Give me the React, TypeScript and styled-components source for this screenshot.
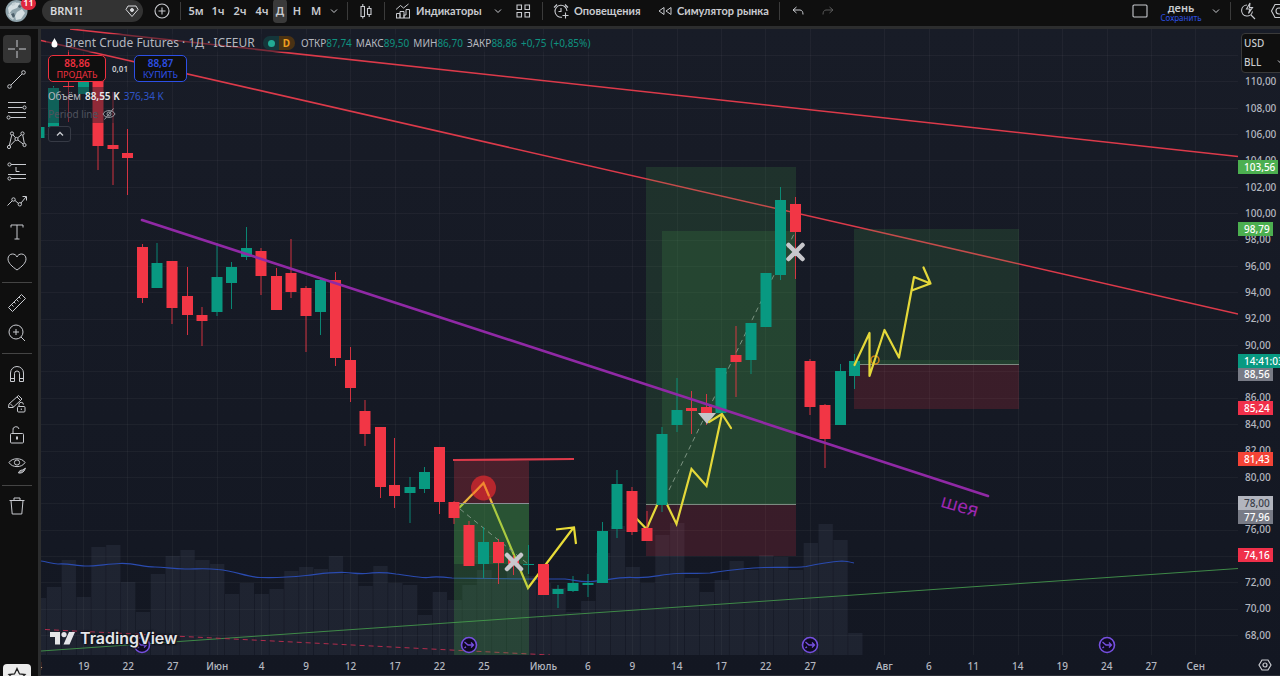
import React from "react";
import styled, { createGlobalStyle } from "styled-components";

const FONT = '"Noto Sans", "Open Sans", "Liberation Sans", sans-serif';

const GlobalStyle = createGlobalStyle`
  *, *::before, *::after { box-sizing: border-box; }
  html, body { margin: 0; padding: 0; background: #0f0f0f; }
  button, input { font: inherit; color: inherit; }
  button { background: none; border: 0; padding: 0; cursor: pointer; }
`;

/* ---------- chart geometry ---------- */

const X0 = 41;
const Y0 = 29;
const W = 1197;
const H = 626;
const BOTTOM = Y0 + H;
const PITCH = 14.84;

const xPct = (x: number) => `${((x - X0) / W) * 100}%`;
const yPct = (y: number) => `${((y - Y0) / H) * 100}%`;

type Candle = [x: number, up: 0 | 1, top: number, bottom: number, high: number, low: number];

const candles: Candle[] = [
  [39, 1, 127, 138, 127, 138],
  [53.5, 1, 88, 127, 86, 127],
  [68.5, 0, 86, 87, 50, 122],
  [83.5, 1, 82, 94, 82, 94],
  [98, 0, 70, 146, 70, 170],
  [113, 0, 145, 149, 92, 185],
  [127.5, 0, 153, 158, 129, 195],
  [142.5, 0, 247, 298, 244, 303],
  [157, 1, 263, 288, 243, 288],
  [172, 0, 261, 308, 261, 324],
  [187.5, 0, 296, 315, 267, 335],
  [202, 0, 315, 321, 307, 346],
  [217, 1, 277, 312, 243, 316],
  [231.5, 1, 267, 283, 262, 309],
  [246.5, 1, 248, 257, 227, 260],
  [261, 0, 251, 276, 248, 295],
  [276.5, 0, 276, 310, 268, 310],
  [291, 0, 273, 292, 239, 298],
  [306, 0, 288, 316, 286, 352],
  [320.5, 1, 280, 312, 279, 335],
  [335.5, 0, 280, 358, 272, 366],
  [350.5, 0, 360, 388, 347, 402],
  [365, 0, 411, 434, 400, 446],
  [380.5, 0, 427, 487, 427, 498],
  [394.5, 0, 485, 496, 438, 508],
  [410, 1, 487, 493, 477, 523],
  [424.5, 1, 472, 489, 467, 493],
  [439.5, 0, 447, 502, 447, 514],
  [454, 0, 502, 518, 501, 524],
  [469, 0, 525, 566, 521, 566],
  [483.5, 1, 542, 564, 527, 578],
  [498.5, 0, 542, 563, 539, 584],
  [513.5, 0, 558, 564, 555, 575],
  [528.5, 1, 564, 565, 545, 574],
  [543.5, 0, 564, 595, 564, 595],
  [558, 1, 589, 594, 585, 608],
  [573, 1, 583, 591, 576, 592],
  [588, 1, 583, 585, 574, 597],
  [602.5, 1, 531, 583, 522, 583],
  [617, 1, 484, 529, 470, 538],
  [632, 0, 491, 532, 487, 535],
  [647, 0, 528, 541, 511, 541],
  [662, 1, 434, 505, 427, 512],
  [677, 1, 410, 425, 378, 432],
  [691.5, 0, 408, 411, 391, 434],
  [706.5, 0, 407, 413, 394, 425],
  [721, 1, 368, 413, 368, 413],
  [736, 0, 355, 362, 326, 397],
  [751, 1, 323, 360, 323, 374],
  [766, 1, 273, 327, 273, 327],
  [780.5, 1, 200, 275, 187, 280],
  [795.5, 0, 204, 232, 197, 279],
  [810, 0, 361, 407, 359, 415],
  [825, 0, 405, 439, 404, 468],
  [840.5, 1, 371, 425, 364, 425],
  [854.5, 1, 361, 376, 354, 389],
];

const volumeTops = [
  598, 587, 560, 597, 547, 545, 582, 612, 574, 556, 550, 560, 564, 594, 583, 594, 589, 571, 567,
  569, 556, 574, 586, 566, 583, 585, 615, 592, 600, 585, 570, 578, 568, 576, 583, 588, 612, 601,
  553, 526, 567, 583, 535, 523, 578, 592, 580, 561, 570, 555, 557, 570, 543, 524, 540, 633,
];

const gridX = [
  83, 127, 172, 217, 261, 306, 350, 395, 439, 484, 543, 588, 632, 677, 721, 765, 810, 884, 929,
  973, 1018, 1062, 1107, 1151, 1195,
];

const prices = Array.from({ length: 22 }, (_, i) => 110 - i * 2);

/* round prices whose place on the axis is taken by a tag */
const taken = new Set([88, 78, 74]);

const timeLabels: [string, number][] = [
  ["4", 1], ["19", 4], ["22", 7], ["27", 10], ["Июн", 13], ["4", 16], ["9", 19], ["12", 22],
  ["17", 25], ["22", 28], ["25", 31], ["Июль", 35], ["6", 38], ["9", 41], ["14", 44], ["17", 47],
  ["22", 50], ["27", 53], ["Авг", 58], ["6", 61], ["11", 64], ["14", 67], ["19", 70], ["24", 73],
  ["27", 76], ["Сен", 79],
];

const priceTags: { text: string; y: number; bg: string; fg?: string; wide?: boolean }[] = [
  { text: "103,56", y: 167, bg: "#4caf50", wide: true },
  { text: "98,79", y: 229, bg: "#4caf50" },
  { text: "88,56", y: 374, bg: "#787b86" },
  { text: "14:41:03", y: 361, bg: "#089981", wide: true },
  { text: "85,24", y: 408, bg: "#f0304a" },
  { text: "81,43", y: 459, bg: "#f44336" },
  { text: "78,00", y: 503, bg: "#b2b5be", fg: "#3a3e4a" },
  { text: "77,96", y: 517, bg: "#787b86" },
  { text: "74,16", y: 555, bg: "#f0304a" },
];

/* ---------- frame ---------- */

const Page = styled.div`
  display: flex;
  flex-direction: column;
  height: 100vh;
  min-height: 560px;
  overflow: hidden;
  background: #0f0f0f;
  color: #c9cbd0;
  font-family: ${FONT};
  font-size: 11px;
  line-height: 14px;
`;

const Toolbar = styled.header`
  display: flex;
  align-items: center;
  flex: none;
  height: 29px;
  padding-bottom: 4px;
  border-bottom: 3px solid #2c2d2e;
  background: #0f0f0f;
  white-space: nowrap;
  overflow: hidden;
`;

const Divider = styled.span`
  flex: none;
  width: 1px;
  height: 18px;
  background: #3b3b3b;
`;

const Avatar = styled.button`
  position: relative;
  flex: none;
  width: 34px;
  height: 24px;
  margin-right: 8px;
  padding-left: 5px;
  svg { display: block; }
`;

const Badge = styled.span`
  position: absolute;
  top: -2px;
  right: -2px;
  width: 15px;
  height: 13px;
  border-radius: 7px;
  background: #e0283e;
  color: #fff;
  font-size: 9px;
  font-weight: 600;
  line-height: 12px;
  text-align: center;
`;

const SymbolSearch = styled.button`
  display: flex;
  align-items: center;
  justify-content: space-between;
  flex: none;
  width: 101px;
  height: 22px;
  padding: 0 4px 0 8px;
  border-radius: 11px;
  background: #333333;
  color: #d8d9dc;
  font-weight: 600;
`;

const ToolButton = styled.button<{ $w: number; $active?: boolean }>`
  display: flex;
  align-items: center;
  justify-content: center;
  flex: none;
  width: ${(p) => p.$w}px;
  height: 24px;
  border-radius: 4px;
  background: ${(p) => (p.$active ? "#3a3a3a" : "transparent")};
  font-weight: 600;
`;

const LabelButton = styled(ToolButton)`
  justify-content: flex-start;
  gap: 5px;
  padding-left: 10px;
  font-family: Lato, ${FONT};
  font-weight: 700;
`;

const Intervals = styled.div`
  display: flex;
  align-items: center;
  padding: 0 4px;
`;

const Spacer = styled.div`
  flex: 1;
`;

const LayoutName = styled.button`
  display: flex;
  flex-direction: column;
  align-items: center;
  flex: none;
  width: 42px;
  padding-top: 2px;
  line-height: 10px;
  font-weight: 600;
  small {
    color: #2d50e6;
    font-size: 8px;
    font-weight: 400;
    line-height: 9px;
  }
`;

const Main = styled.div`
  display: flex;
  flex: 1;
  min-height: 0;
`;

const Sidebar = styled.nav`
  display: flex;
  flex-direction: column;
  flex: none;
  width: 41px;
  padding: 6px 7px 0 3px;
  border-right: 3px solid #2c2d2e;
  background: #0f0f0f;
  overflow: hidden;
`;

const ToolGroup = styled.div<{ $h: number }>`
  display: flex;
  flex-direction: column;
  justify-content: space-between;
  flex: none;
  height: ${(p) => p.$h}px;
`;

const SideButton = styled.button<{ $active?: boolean }>`
  display: flex;
  align-items: center;
  justify-content: center;
  flex: none;
  width: 28px;
  height: 28px;
  border-radius: 4px;
  background: ${(p) => (p.$active ? "#343434" : "transparent")};
`;

const SideDivider = styled.hr`
  flex: none;
  width: 30px;
  height: 1px;
  margin: 6px 0 6px -1px;
  border: 0;
  background: #444444;
`;

const Favorites = styled.button`
  display: flex;
  justify-content: center;
  align-items: flex-start;
  flex: none;
  width: 28px;
  height: 12px;
  margin-top: auto;
  padding-top: 3px;
  border-radius: 4px 4px 0 0;
  background: #ececec;
  color: #222;
  overflow: hidden;
`;

const ChartArea = styled.main`
  display: flex;
  flex-direction: column;
  flex: 1;
  min-width: 0;
  background: linear-gradient(#181c27, #131722);
`;

const PlotRow = styled.div`
  display: flex;
  flex: 1;
  min-height: 0;
`;

const Plot = styled.section`
  position: relative;
  flex: 1;
  min-width: 0;
  overflow: hidden;
`;

const Canvas = styled.svg`
  display: block;
  width: 100%;
  height: 100%;
`;

const PriceAxis = styled.aside`
  position: relative;
  display: flex;
  flex-direction: column;
  flex: none;
  width: 42px;
  padding: 39px 0 7px;
  overflow: hidden;
`;

const PriceLabel = styled.span`
  display: flex;
  align-items: center;
  flex: 1;
  padding-left: 7px;
  color: #b5b8c0;
  font-size: 10px;
  font-weight: 500;
`;

const PriceTag = styled.span<{ $bg: string; $fg?: string; $wide?: boolean }>`
  position: absolute;
  left: 0;
  min-width: ${(p) => (p.$wide ? 40 : 35)}px;
  height: 14px;
  margin-top: -7px;
  padding-left: 6px;
  background: ${(p) => p.$bg};
  color: ${(p) => p.$fg || "#fff"};
  font-size: 10px;
  font-weight: 500;
  line-height: 14px;
`;

const Units = styled.div`
  position: absolute;
  top: 4px;
  left: 3px;
  display: flex;
  flex-direction: column;
  gap: 1px;
  width: 50px;
  height: 40px;
  border: 1px solid #3a3a3a;
  border-radius: 4px;
  background: #0f0f0f;
`;

const UnitButton = styled.button`
  display: flex;
  align-items: center;
  gap: 16px;
  width: 100%;
  height: 18px;
  padding-left: 2px;
  font-size: 10px;
  font-weight: 500;
`;

const TimeRow = styled.footer`
  display: flex;
  flex: none;
  height: 21px;
  border-bottom: 1px solid #2a2d36;
`;

const TimeViewport = styled.div`
  flex: 1;
  min-width: 0;
  overflow: hidden;
`;

const TimeGrid = styled.div`
  display: grid;
  grid-template-columns: repeat(81, minmax(0, 1fr));
  margin: 0 20px 0 -24px;
  padding-top: 4px;
`;

const TimeLabel = styled.span<{ $col: number }>`
  grid-row: 1;
  grid-column: ${(p) => p.$col} / span 3;
  text-align: center;
  color: #b5b8c0;
  font-size: 10px;
  font-weight: 500;
`;

const AxisSettings = styled.button`
  display: flex;
  align-items: center;
  flex: none;
  width: 42px;
  padding-left: 20px;
`;

/* ---------- legend over the plot ---------- */

const Legend = styled.div`
  position: absolute;
  top: 5px;
  left: 5px;
  display: flex;
  flex-direction: column;
  align-items: flex-start;
  white-space: nowrap;
`;

const TitleRow = styled.div`
  display: flex;
  align-items: center;
  height: 18px;
  padding: 0 2px 0 5px;
  background: rgba(24, 28, 39, 0.5);
`;

const Title = styled.h1`
  width: 198px;
  margin: 0 0 0 7px;
  color: #b4b7bf;
  font-size: 12px;
  font-weight: 400;
  line-height: 18px;
`;

const StatusPill = styled.span`
  display: flex;
  align-items: center;
  justify-content: space-between;
  width: 32px;
  height: 14px;
  margin-right: 6px;
  padding: 0 5px;
  border-radius: 7px;
  background: linear-gradient(90deg, #14363a 50%, #4a3213 50%);
  color: #f0a020;
  font-size: 10px;
  font-weight: 700;
  &::before {
    content: "";
    width: 7px;
    height: 7px;
    border-radius: 50%;
    background: #22ab94;
  }
`;

const Quotes = styled.dl`
  display: flex;
  gap: 4px;
  margin: 0;
  font-size: 10px;
  div { display: flex; }
  dt { color: #b4b7bf; }
  dd { margin: 0; color: #0f9280; }
`;

const TradeRow = styled.div`
  display: flex;
  align-items: center;
  height: 27px;
  margin: 3px 0 5px 2px;
`;

const TradeButton = styled.button<{ $color: string; $w: number }>`
  width: ${(p) => p.$w}px;
  height: 27px;
  border: 1px solid ${(p) => p.$color};
  border-radius: 5px;
  background: #0f0f0f;
  color: ${(p) => p.$color};
  font-size: 9px;
  line-height: 12px;
  b {
    display: block;
    font-size: 10px;
    font-weight: 600;
    line-height: 12px;
  }
`;

const Spread = styled.span`
  width: 28px;
  text-align: center;
  font-size: 8px;
  font-weight: 600;
`;

const StudyRow = styled.div<{ $muted?: boolean }>`
  display: flex;
  align-items: center;
  gap: 4px;
  height: 18px;
  padding: 0 3px 0 2px;
  background: rgba(24, 28, 39, 0.45);
  color: ${(p) => (p.$muted ? "#50535e" : "#b4b7bf")};
  font-size: 10px;
  strong { color: #e8e9ec; font-weight: 600; }
  em { color: #2f55c8; font-style: normal; }
  svg { color: #9a9ca3; }
`;

const CollapseButton = styled.button`
  display: flex;
  align-items: center;
  justify-content: center;
  width: 23px;
  height: 16px;
  margin: 3px 0 0 2px;
  border: 1px solid #363a45;
  border-radius: 3px;
  background: rgba(24, 28, 39, 0.6);
`;

const Brand = styled.a`
  position: absolute;
  left: 9px;
  bottom: 6px;
  display: flex;
  align-items: center;
  gap: 5px;
  color: #e4e5e8;
  font-family: Inter, "Liberation Sans", sans-serif;
  font-size: 16px;
  font-weight: 600;
  line-height: 22px;
  text-decoration: none;
  text-shadow: 0 0 2px #10131b, 1px 1px 1px #10131b, -1px -1px 1px #10131b, 0 0 3px #10131b;
`;

const NeckNote = styled.span`
  position: absolute;
  color: #9c27b0;
  font-size: 19px;
  line-height: 24px;
  transform: translate(-50%, -50%) rotate(16deg);
`;

/* ---------- icons ---------- */

function Icon({ w = 22, h = 22, sw = 1, children }: { w?: number; h?: number; sw?: number; children: React.ReactNode }) {
  return (
    <svg width={w} height={h} viewBox={`0 0 ${w} ${h}`} fill="none" stroke="currentColor" strokeWidth={sw} aria-hidden="true">
      {children}
    </svg>
  );
}

const Chevron = () => (
  <Icon w={8} h={6}><path d="M1 1.5 4 4.5 7 1.5" /></Icon>
);

const Hexagon = () => (
  <Icon w={14} h={14} sw={1.2}>
    <path d="M4 2h6l3 5-3 5H4L1 7z" />
    <circle cx="7" cy="7" r="2" />
  </Icon>
);

const sideIcons: Record<string, React.ReactNode> = {
  "Перекрестие": <path d="M11 2v7M11 13v7M2 11h7M13 11h7" />,
  "Линия тренда": (
    <>
      <circle cx="3.5" cy="18.5" r="1.8" />
      <circle cx="17.5" cy="4.5" r="1.8" />
      <path d="M5 17 16 6" />
    </>
  ),
  "Фибоначчи": (
    <>
      <path d="M2 3.5h18M2 8.5h14.5M2 13.5h18M4.5 18.5H20" />
      <circle cx="18.5" cy="8.5" r="1.6" />
      <circle cx="2.6" cy="18.5" r="1.6" />
    </>
  ),
  "Паттерны": (
    <>
      <circle cx="6" cy="4.5" r="1.6" />
      <circle cx="3" cy="18" r="1.6" />
      <circle cx="10.5" cy="10" r="1.6" />
      <circle cx="16.5" cy="4.5" r="1.6" />
      <circle cx="18.5" cy="16" r="1.6" />
      <path d="M5.7 6.2 3.4 16.3M7 5.8l2.5 3M4 16.8l5.4-5.6M11.7 8.8l3.6-3M16.8 6.2l1.5 8.1M11.8 11l5.4 4" />
    </>
  ),
  "Прогнозирование": (
    <>
      <path d="M5 4.5h15M10 7v4.500h3.500M2 14.500h18M5 18.500h15" />
      <circle cx="3.5" cy="4.5" r="1.6" />
      <circle cx="3.5" cy="18.5" r="1.6" />
    </>
  ),
  "Стрелка": (
    <>
      <path d="M1.5 15.5 6 11M9 10.5l3.500 3M15 13l5-6M16.5 6.5H20.500V10.500" />
      <circle cx="7.5" cy="9.5" r="1.7" />
      <circle cx="13.8" cy="14.3" r="1.7" />
    </>
  ),
  "Текст": <path d="M5 6.5V4h12v2.500M11 4v14M8.500 18h5" />,
  "Иконки": (
    <path d="M11 19C6 15.500 2 12 2 7.800 2 5 4 3 6.500 3 8.500 3 10.200 4 11 6 11.800 4 13.500 3 15.500 3 18 3 20 5 20 7.800 20 12 16 15.500 11 19z" />
  ),
  "Линейка": (
    <path d="M2.500 15.500 15.500 2.500 19.500 6.500 6.500 19.500zM5.500 12.500l2 2M8 10l1.500 1.500M10.500 7.500l2 2M13 5l1.500 1.500" />
  ),
  "Увеличить": (
    <>
      <circle cx="10" cy="10" r="7" />
      <path d="M15 15l4 4M10 7v6M7 10h6" />
    </>
  ),
  "Магнит": (
    <path d="M4.500 18.500V10a6.500 6.500 0 0 1 13 0v8.500h-4V10.500a2.500 2.500 0 0 0-5 0v8zM4.500 15.500h4M13.500 15.500h4" />
  ),
  "Режим рисования": (
    <>
      <path d="M2.500 14.500 3 11 12.500 2.500 16 6 7 14.500zM4 10.500l3.500 3.500M11 4l3.500 3.500" />
      <rect x="11.5" y="13.5" width="7.5" height="5.5" rx="1" />
      <path d="M13 13.500v-2a2.200 2.200 0 0 1 4.400 0M15.300 15.500v1.500" />
    </>
  ),
  "Замок": (
    <>
      <rect x="4.5" y="9.5" width="13" height="9.5" rx="1" />
      <path d="M7 9.500V6.500a3 3 0 0 1 6-1.500" />
      <path d="M11 12.500v3" strokeWidth="2" />
    </>
  ),
  "Скрыть": (
    <>
      <path d="M3 8.500C6 3.500 16 3.500 19 8.500 16 14 6 14 3 8.500z" />
      <circle cx="11" cy="8.5" r="2.6" />
      <path d="M12.500 19c.5-2.500 2.500-2.800 4-3l3-1.800-1.500 2.800c-1.500 2-3.500 2.200-5.500 2z" fill="currentColor" fillOpacity="0.6" />
    </>
  ),
  "Удалить": <path d="M3.500 5.500h15M8 5.500V3h6v2.500M5 5.500 6.200 19h9.600L17 5.500" />,
};

function SideGroup({ names, h }: { names: string[]; h: number }) {
  return (
    <ToolGroup $h={h}>
      {names.map((name) => (
        <SideButton key={name} $active={name === "Перекрестие"} aria-label={name}>
          <Icon>{sideIcons[name]}</Icon>
        </SideButton>
      ))}
    </ToolGroup>
  );
}

/* ---------- chart ---------- */

function RollMarker({ x }: { x: number }) {
  return (
    <g transform={`translate(${x} 645)`} fill="none" stroke="#7650e0">
      <circle r="7.5" fill="#0f0a20" strokeWidth="1.6" />
      <path d="M-4.500 -3 -1 0H4.500M2 -2.500 4.500 0 2 2.500M-4.500 3l1.500-1.300" strokeWidth="1.300" />
    </g>
  );
}

function CrossMark({ x, y }: { x: number; y: number }) {
  return (
    <path
      d={`M${x - 7} ${y - 7}l14 14M${x + 7} ${y - 7}l-14 14`}
      stroke="#c8c8cc"
      strokeWidth="4.5"
      strokeLinecap="round"
    />
  );
}

function PriceChart() {
  return (
    <Canvas viewBox={`${X0} ${Y0} ${W} ${H}`} preserveAspectRatio="none" role="img" aria-label="График Brent Crude Futures">
      <g stroke="#ffffff" strokeOpacity="0.04" shapeRendering="crispEdges">
        {gridX.map((x) => (
          <line key={x} x1={x} x2={x} y1={Y0} y2={BOTTOM} />
        ))}
        {Array.from({ length: 23 }, (_, i) => Math.round(55 + i * 26.37)).map((y) => (
          <line key={y} x1={X0} x2={1238} y1={y} y2={y} />
        ))}
      </g>

      <g fill="#70789a" fillOpacity="0.12">
        {volumeTops.map((top, i) => {
          const x = 39 + i * PITCH - 7;
          return <rect key={i} x={x} y={top} width={14.3} height={BOTTOM - top} />;
        })}
      </g>

      <path
        d="M41 561C48 562 52 564 58 564C68 563 76 566 85 566C98 566 106 564 120 563.5C136 563 142 567 155 567C165 567 172 569 185 569C198 569 206 568 218 569.5C236 571 246 577 260 577.5C275 578 292 577 306 575.5C320 574 330 572 345 572.5C354 573 358 574 366 573.5C376 572 384 572 396 574C408 575 416 578 428 577.5C436 576 444 577 452 578L528 579H565C575 580 580 582 590 581.5C604 581 616 577 632 577.5C652 579 660 574 677 573.5C690 573 698 574 710 573C724 571 744 568 764 567.5C780 567 792 568 806 566.5C818 564 830 562 842 561C846 561 850 562 854 563"
        fill="none"
        stroke="#2a4bb0"
        strokeWidth="1.2"
      />
      <line x1="41" y1="651" x2="1238" y2="568.5" stroke="#3f8a48" strokeWidth="1" />
      <line x1="45" y1="629.5" x2="550" y2="655" stroke="#b02c4c" strokeWidth="1" strokeDasharray="5 4" />

      {/* trend lines */}
      <g stroke="#dc3a4a" strokeWidth="1.6">
        <line x1="70" y1="29" x2="1238" y2="156.5" />
        <line x1="41" y1="40.5" x2="1238" y2="314" />
        <line x1="453" y1="460" x2="574" y2="459" strokeWidth="2.2" />
      </g>

      <path
        d="M459 508 483.5 483 528 588 574 527M556 529.5 574 527.5 576 544"
        fill="none"
        stroke="#e8dc38"
        strokeWidth="2.2"
      />

      {/* short position */}
      <rect x="454" y="461" width="75" height="42" fill="#f23645" fillOpacity="0.24" />
      <rect x="454" y="503" width="75" height="152" fill="#4caf50" fillOpacity="0.24" />
      <rect x="454" y="503" width="75" height="61" fill="#4caf50" fillOpacity="0.2" />
      <line x1="454" x2="529" y1="503.5" y2="503.5" stroke="#8b8e96" />

      {/* long position */}
      <rect x="646" y="167" width="150" height="337" fill="#4caf50" fillOpacity="0.16" />
      <rect x="662" y="231" width="134" height="273" fill="#4caf50" fillOpacity="0.16" />
      <rect x="646" y="504" width="150" height="52" fill="#f23645" fillOpacity="0.17" />
      <line x1="646" x2="796" y1="504.5" y2="504.5" stroke="#7c8a80" />

      {/* open long position */}
      <rect x="854" y="229" width="165" height="135" fill="#4caf50" fillOpacity="0.16" />
      <rect x="854" y="360" width="165" height="4" fill="#4caf50" fillOpacity="0.12" />
      <rect x="854" y="364" width="165" height="45" fill="#f23645" fillOpacity="0.17" />
      <line x1="854" x2="1019" y1="364.5" y2="364.5" stroke="#7c8a80" />

      <g stroke="#7c9482" strokeDasharray="5 4">
        <line x1="460" y1="509" x2="528" y2="564" />
        <line x1="669" y1="490" x2="795" y2="232" />
      </g>

      <path
        d="M634 516 646.5 529 662 494 676.5 524 691.5 469 706.5 486 722 414"
        fill="none"
        stroke="#e4d83a"
        strokeWidth="2.2"
      />

      {candles.map(([x, up, top, bottom, high, low]) => (
        <g key={x} fill={up ? "#089981" : "#f23645"}>
          <rect x={x - 0.5} y={high} width={1} height={low - high} fillOpacity="0.85" />
          <rect x={x - 5.5} y={top} width={11} height={bottom - top} />
        </g>
      ))}

      <circle cx="483.5" cy="488" r="12.5" fill="#e02a2e" fillOpacity="0.72" />
      <path d="M473 494 483.5 483 489 496" fill="none" stroke="#f08a30" strokeWidth="2" />
      <path d="M698 413h18l-9 11z" fill="#c4c6ca" />
      <circle cx="875" cy="360" r="4" fill="none" stroke="#f08a10" strokeOpacity="0.8" strokeWidth="1.6" />
      <line x1="142" y1="220" x2="988" y2="496" stroke="#9029a5" strokeWidth="2.6" strokeLinecap="round" />

      <g fill="none" stroke="#e4d83a" strokeWidth="2.2" strokeLinejoin="round" strokeLinecap="round">
        <path d="M709 422 722 414 731 428" />
        <path d="M854.5 365 869.5 333V376L884.5 330 899 357.5 914 277 930.5 283.5 913 290M923.5 267.5 930.5 283.5" />
      </g>

      <CrossMark x={795.5} y={252} />
      <CrossMark x={514} y={562} />

      <RollMarker x={142} />
      <RollMarker x={469} />
      <RollMarker x={810} />
      <RollMarker x={1107} />
    </Canvas>
  );
}

const quotes: [string, string][] = [
  ["ОТКР", "87,74"],
  ["МАКС", "89,50"],
  ["МИН", "86,70"],
  ["ЗАКР", "88,86"],
  ["", "+0,75"],
  ["", "(+0,85%)"],
];

function ChartLegend() {
  return (
    <Legend>
      <TitleRow>
        <svg width="7" height="10" viewBox="0 0 7 10" fill="#ffffff" aria-hidden="true">
          <path d="M3.500 0C4.500 2.500 6.500 4 6.500 6.500a3 3 0 0 1-6 0C.5 4 2.500 2.500 3.500 0z" />
        </svg>
        <Title>Brent Crude Futures · 1Д · ICEEUR</Title>
        <StatusPill>D</StatusPill>
        <Quotes>
          {quotes.map(([k, v]) => (
            <div key={v}>
              <dt>{k}</dt>
              <dd>{v}</dd>
            </div>
          ))}
        </Quotes>
      </TitleRow>
      <TradeRow>
        <TradeButton $color="#f0303f" $w={58}><b>88,86</b>ПРОДАТЬ</TradeButton>
        <Spread>0,01</Spread>
        <TradeButton $color="#2d50e6" $w={53}><b>88,87</b>КУПИТЬ</TradeButton>
      </TradeRow>
      <StudyRow>Объём <strong>88,55 K</strong> <em>376,34 K</em></StudyRow>
      <StudyRow $muted>
        Period line
        <Icon w={14} h={12}>
          <path d="M1 6C3 1.500 11 1.500 13 6 11 10.500 3 10.500 1 6zM2.500 11.500 11.500.5" />
          <circle cx="7" cy="6" r="2" />
        </Icon>
      </StudyRow>
      <CollapseButton aria-label="Свернуть">
        <Icon w={8} h={6} sw={1.3}><path d="M1 4.500 4 1.500 7 4.500" /></Icon>
      </CollapseButton>
    </Legend>
  );
}

function TopToolbar() {
  return (
    <Toolbar>
      <Avatar aria-label="Профиль">
        <svg width="23" height="23" viewBox="0 0 23 23" aria-hidden="true">
          <circle cx="11.5" cy="11" r="11" fill="#8fa3ab" />
          <path d="M3 8c3-5 8-6 12-5l-3 5-5 2-3 4zM12 12l5-3 3 4-4 6-5 1-1-4z" fill="#d5dfe2" />
          <path d="M3 14l3-1 3 5-1 2-4-3zM7 3l4-1-1 3-3 1z" fill="#c3d0d4" />
          <path d="M6 14l3-1 1 3-2 2zM14 5l3 1-2 2-2-1z" fill="#4c5f6a" />
        </svg>
        <Badge>11</Badge>
      </Avatar>
      <SymbolSearch>
        BRN1!
        <Icon w={14} h={14}>
          <path d="M3 2h8l2 3.500L7 12.500 1 5.500z" />
          <circle cx="7" cy="6" r="1.5" fill="currentColor" />
        </Icon>
      </SymbolSearch>
      <ToolButton $w={37} aria-label="Добавить символ">
        <Icon w={16} h={16} sw={1.1}>
          <circle cx="8" cy="8" r="7" />
          <path d="M8 4.500v7M4.500 8h7" />
        </Icon>
      </ToolButton>
      <Divider />
      <Intervals>
        <ToolButton $w={22}>5м</ToolButton>
        <ToolButton $w={22}>1ч</ToolButton>
        <ToolButton $w={22}>2ч</ToolButton>
        <ToolButton $w={22}>4ч</ToolButton>
        <ToolButton $w={14} $active>Д</ToolButton>
        <ToolButton $w={20}>Н</ToolButton>
        <ToolButton $w={18}>М</ToolButton>
        <ToolButton $w={18} aria-label="Интервалы"><Chevron /></ToolButton>
      </Intervals>
      <Divider />
      <ToolButton $w={36} aria-label="Свечи">
        <Icon w={12} h={16} sw={1.1}>
          <path d="M1 3.500h3.500v10H1zM2.800 1v2.500M2.800 13.500V15.500M7.500 5.500h3.500v6H7.500zM9.200 3v2.500M9.200 11.500V14" />
        </Icon>
      </ToolButton>
      <Divider />
      <LabelButton $w={101}>
        <Icon w={16} h={16}>
          <path d="M1.500 15V10.500h3.500V15M5 15V8.500h4V15M9 15v-3h2V6.500h3.500V15M1 15h14M1 6.500 5.500 2.500 8.500 5 13.500 1" />
        </Icon>
        Индикаторы
      </LabelButton>
      <ToolButton $w={24} aria-label="Избранные индикаторы"><Chevron /></ToolButton>
      <ToolButton $w={32} aria-label="Шаблоны">
        <Icon w={20} h={14} sw={1.1}>
          <path d="M1 1h4.500v4.500H1zM9 1h4.500v4.500H9zM1 8.500h4.500V13H1zM9 8.500h4.500V13H9z" />
        </Icon>
      </ToolButton>
      <Divider />
      <LabelButton $w={105}>
        <Icon w={16} h={16} sw={1.1}>
          <path d="M9 14.200A6 6 0 1 1 14 8M8 5v3.500H5.500M1 4.500 4 1.500M12 1.500l3 3M12.500 9.500v6M9.500 12.500h6" />
        </Icon>
        Оповещения
      </LabelButton>
      <LabelButton $w={131}>
        <Icon w={14} h={10}>
          <path d="M6 1.500v7L1 5zM13 1.500v7L8 5z" />
        </Icon>
        Симулятор рынка
      </LabelButton>
      <Divider />
      <ToolButton $w={36} aria-label="Отменить">
        <Icon w={12} h={10}><path d="M4.500 1 1 4l3.500 3M1 4h7c2 0 3 2 3 4.500" /></Icon>
      </ToolButton>
      <ToolButton $w={24} aria-label="Повторить">
        <Icon w={12} h={10}><path d="M7.500 1 11 4 7.500 7M11 4H4C2 4 1 6 1 8.500" stroke="#5a5a5a" /></Icon>
      </ToolButton>
      <Spacer />
      <ToolButton $w={40} aria-label="Сетка графиков">
        <Icon w={16} h={14} sw={1.1}><rect x="1" y="1" width="14" height="12" rx="1" /></Icon>
      </ToolButton>
      <LayoutName>день<small>Сохранить</small></LayoutName>
      <ToolButton $w={28} aria-label="Макеты"><Chevron /></ToolButton>
      <Divider />
      <ToolButton $w={34} aria-label="Быстрый поиск">
        <Icon w={16} h={18} sw={1.1}>
          <path d="M7 3A5.500 5.500 0 1 0 12.500 9.500M11 13l4 4M10 1 6.500 7H10L8.500 11.500 12.500 5.500H9.500z" />
        </Icon>
      </ToolButton>
      <ToolButton $w={15} aria-label="Настройки">
        <svg width="15" height="16" viewBox="-6 0 15 16" fill="none" stroke="currentColor" strokeWidth="1.1">
          <path d="M4 1.500h8l4 6.500-4 6.500H4L.5 8z" />
          <circle cx="8" cy="8" r="3" />
        </svg>
      </ToolButton>
    </Toolbar>
  );
}

export default function App() {
  return (
    <Page>
      <GlobalStyle />
      <TopToolbar />
      <Main>
        <Sidebar>
          <SideGroup
            h={241}
            names={["Перекрестие", "Линия тренда", "Фибоначчи", "Паттерны", "Прогнозирование", "Стрелка", "Текст", "Иконки"]}
          />
          <SideDivider />
          <SideGroup h={58} names={["Линейка", "Увеличить"]} />
          <SideDivider />
          <SideGroup h={119} names={["Магнит", "Режим рисования", "Замок", "Скрыть"]} />
          <SideDivider />
          <SideGroup h={28} names={["Удалить"]} />
          <Favorites aria-label="Избранное">
            <Icon w={20} h={20} sw={1.3}>
              <path d="M10 1.500 12.500 7 18 7.500 14 11.500 15 17 10 14.500 5 17 6 11.500 2 7.500 7.500 7z" />
            </Icon>
          </Favorites>
        </Sidebar>
        <ChartArea>
          <PlotRow>
            <Plot>
              <PriceChart />
              <ChartLegend />
              <NeckNote style={{ left: xPct(960), top: yPct(505) }}>шея</NeckNote>
              <Brand href="#">
                <svg width="25" height="13" viewBox="0 0 25 13" fill="currentColor" aria-hidden="true">
                  <path d="M0 0h10v12.500H5V5H0zM19 0h6l-5.500 12.500h-6z" />
                  <circle cx="14" cy="2.6" r="2.6" />
                </svg>
                TradingView
              </Brand>
            </Plot>
            <PriceAxis>
              {prices.map((p) => (
                <PriceLabel key={p}>{taken.has(p) ? null : `${p},00`}</PriceLabel>
              ))}
              {priceTags.map((t) => (
                <PriceTag key={t.text} $bg={t.bg} $fg={t.fg} $wide={t.wide} style={{ top: yPct(t.y) }}>
                  {t.text}
                </PriceTag>
              ))}
              <Units>
                <UnitButton>USD<Chevron /></UnitButton>
                <UnitButton>BLL<Chevron /></UnitButton>
              </Units>
            </PriceAxis>
          </PlotRow>
          <TimeRow>
            <TimeViewport>
              <TimeGrid>
                {timeLabels.map(([text, col]) => (
                  <TimeLabel key={col} $col={col}>{text}</TimeLabel>
                ))}
              </TimeGrid>
            </TimeViewport>
            <AxisSettings aria-label="Настройки шкалы"><Hexagon /></AxisSettings>
          </TimeRow>
        </ChartArea>
      </Main>
    </Page>
  );
}
